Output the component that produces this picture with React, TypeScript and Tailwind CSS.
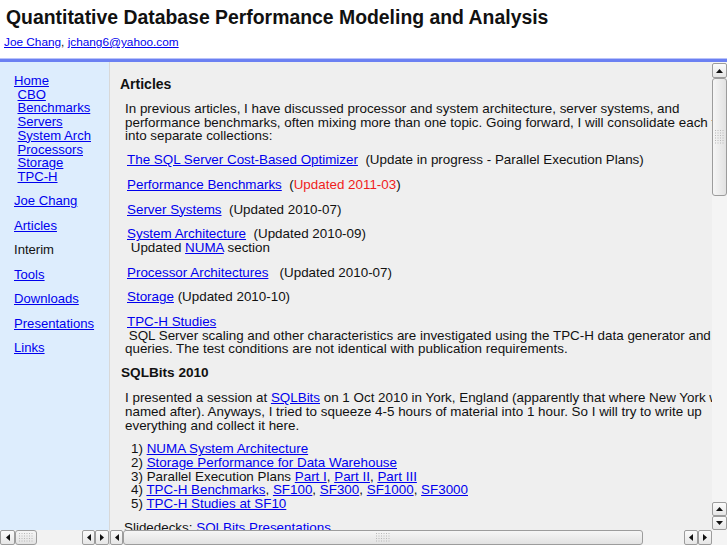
import React from 'react';

const A = 'text-[#0000ee] underline';

function Tri({ dir }: { dir: 'up' | 'down' | 'left' | 'right' }) {
  const pts = {
    up: '1,5 4.5,1 8,5',
    down: '1,1 4.5,5 8,1',
    left: '5,1 1,4.5 5,8',
    right: '1,1 5,4.5 1,8',
  }[dir];
  const vertical = dir === 'up' || dir === 'down';
  return (
    <svg width={vertical ? 9 : 6} height={vertical ? 6 : 9} viewBox={vertical ? '0 0 9 6' : '0 0 6 9'}>
      <polygon points={pts} fill="#111" />
    </svg>
  );
}

function Btn({ dir, className = '' }: { dir: 'up' | 'down' | 'left' | 'right'; className?: string }) {
  return (
    <div
      className={`flex items-center justify-center rounded-[2px] border border-[#9c9c9c] bg-gradient-to-b from-[#fbfbfb] to-[#e6e6e6] ${className}`}
    >
      <Tri dir={dir} />
    </div>
  );
}

function Grip({ vertical }: { vertical?: boolean }) {
  const dots = [];
  const cols = vertical ? 4 : 6;
  const rows = vertical ? 6 : 4;
  for (let r = 0; r < rows; r++)
    for (let c = 0; c < cols; c++)
      dots.push(<rect key={`${r}-${c}`} x={c * 2.5} y={r * 2.5} width="1" height="1" fill="#b8b8b8" />);
  return (
    <svg width={cols * 2.5} height={rows * 2.5}>
      {dots}
    </svg>
  );
}

function Thumb({ className = '', vertical }: { className?: string; vertical?: boolean }) {
  return (
    <div
      className={`flex items-center justify-center rounded-[3px] border border-[#9c9c9c] ${
        vertical ? 'bg-gradient-to-r' : 'bg-gradient-to-b'
      } from-[#f6f6f6] to-[#e2e2e2] ${className}`}
    >
      <Grip vertical={vertical} />
    </div>
  );
}

function Item({ children, className = '' }: { children: React.ReactNode; className?: string }) {
  return <div className={`ml-[7px] mt-[11px] ${className}`}>{children}</div>;
}

function Nav() {
  const sub = ['CBO', 'Benchmarks', 'Servers', 'System Arch', 'Processors', 'Storage', 'TPC-H'];
  const main = ['Articles', 'Interim', 'Tools', 'Downloads', 'Presentations', 'Links'];
  return (
    <div className="flex-1 overflow-hidden bg-[#ddedfd] pl-[14px] pt-[12px] text-[13.1px] leading-[13.7px]">
      <a className={A}>Home</a>
      <div className="flex flex-col items-start pl-[3.5px]">
        {sub.map((s) => (
          <a key={s} className={A}>
            {s}
          </a>
        ))}
      </div>
      <div className="mt-[10.4px]">
        <a className={A}>Joe Chang</a>
      </div>
      {main.map((m) => (
        <div key={m} className="mt-[10.8px]">
          {m === 'Interim' ? <span className="text-[#111]">{m}</span> : <a className={A}>{m}</a>}
        </div>
      ))}
    </div>
  );
}

function Content() {
  return (
    <div className="w-[655px] shrink-0 pl-[10px] text-[13.4px] leading-[13.7px] text-[#111]">
      <h3 className="mt-[14px] text-[14px] font-bold leading-[16px]">Articles</h3>
      <p className="ml-[5px] mt-[10px] w-[630px]">
        In previous articles, I have discussed processor and system architecture, server systems, and
        performance benchmarks, often mixing more than one topic. Going forward, I will consolidate each topic
        into separate collections:
      </p>
      <Item className="!mt-[10px]">
        <a className={A}>The SQL Server Cost-Based Optimizer</a>&nbsp; (Update in progress - Parallel Execution
        Plans)
      </Item>
      <Item>
        <a className={A}>Performance Benchmarks</a>&nbsp; (<span className="text-[#f01c1c]">Updated 2011-03</span>)
      </Item>
      <Item>
        <a className={A}>Server Systems</a>&nbsp; (Updated 2010-07)
      </Item>
      <Item>
        <a className={A}>System Architecture</a>&nbsp; (Updated 2010-09)
        <br />
        &nbsp;Updated <a className={A}>NUMA</a> section
      </Item>
      <Item>
        <a className={A}>Processor Architectures</a>&nbsp;&nbsp; (Updated 2010-07)
      </Item>
      <Item>
        <a className={A}>Storage</a> (Updated 2010-10)
      </Item>
      <div className="ml-[5px] mt-[11px] w-[630px]">
        <a className={`${A} ml-[2px]`}>TPC-H Studies</a>
        <br />
        &nbsp;SQL Server scaling and other characteristics are investigated using the TPC-H data generator and test
        queries. The test conditions are not identical with publication requirements.
      </div>
      <h3 className="ml-[1px] mt-[9px] text-[13.6px] font-bold leading-[16px]">SQLBits 2010</h3>
      <p className="ml-[5px] mt-[10px] w-[630px]">
        I presented a session at <a className={A}>SQLBits</a> on 1 Oct 2010 in York, England (apparently that where
        New York was named after). Anyways, I tried to squeeze 4-5 hours of material into 1 hour. So I will try to
        write up everything and collect it here.
      </p>
      <div className="ml-[11px] mt-[10px]">
        <div>
          1) <a className={A}>NUMA System Architecture</a>
        </div>
        <div>
          2) <a className={A}>Storage Performance for Data Warehouse</a>
        </div>
        <div>
          3) Parallel Execution Plans <a className={A}>Part I</a>, <a className={A}>Part II</a>,{' '}
          <a className={A}>Part III</a>
        </div>
        <div>
          4) <a className={A}>TPC-H Benchmarks</a>, <a className={A}>SF100</a>, <a className={A}>SF300</a>,{' '}
          <a className={A}>SF1000</a>, <a className={A}>SF3000</a>
        </div>
        <div>
          5) <a className={A}>TPC-H Studies at SF10</a>
        </div>
      </div>
      <div className="ml-[4px] mt-[10.5px]">
        Slidedecks: <a className={A}>SQLBits Presentations</a>
      </div>
    </div>
  );
}

export default function App() {
  return (
    <div className="flex h-[545px] w-[727px] flex-col overflow-hidden bg-white font-['Liberation_Sans',Arial,sans-serif]">
      <header className="h-[58px] shrink-0 px-[6px] pt-[6px]">
        <h1 className="text-[19.4px] font-bold leading-[22px] text-[#111]">
          Quantitative Database Performance Modeling and Analysis
        </h1>
        <div className="-ml-[2px] mt-[7px] text-[11.8px] leading-[14px] text-[#111]">
          <a className={A}>Joe Chang</a>, <a className={A}>jchang6@yahoo.com</a>
        </div>
      </header>
      <div className="h-[1px] shrink-0 bg-[#b9c3fa]" />
      <div className="h-[3px] shrink-0 bg-[#6b80f2]" />
      <div className="flex min-h-0 flex-1">
        <div className="flex w-[109px] shrink-0 flex-col">
          <Nav />
          <div className="flex h-[15px] shrink-0 bg-[#f2f2f2]">
            <Btn dir="left" className="w-[15px]" />
            <Thumb className="w-[22px]" />
            <div className="flex-1" />
            <Btn dir="left" className="w-[13px]" />
            <Btn dir="right" className="w-[14px]" />
          </div>
        </div>
        <div className="flex min-w-0 flex-1 flex-col border-l border-[#d8d8d8]">
          <div className="flex min-h-0 flex-1">
            <div className="min-w-0 flex-1 overflow-hidden bg-[#efefef]">
              <Content />
            </div>
            <div className="flex w-[15px] shrink-0 flex-col bg-[#f4f4f4] pt-[1px]">
              <Btn dir="up" className="h-[15px]" />
              <Thumb vertical className="h-[118px]" />
              <div className="flex-1" />
              <Btn dir="up" className="h-[14px]" />
              <Btn dir="down" className="h-[14px]" />
            </div>
          </div>
          <div className="flex h-[15px] shrink-0">
            <div className="flex flex-1 bg-[#f2f2f2]">
              <Btn dir="left" className="w-[13px]" />
              <Thumb className="w-[520px]" />
              <div className="flex-1" />
              <Btn dir="left" className="w-[14px]" />
              <Btn dir="right" className="w-[14px]" />
            </div>
            <div className="w-[15px] bg-[#f4f4f4]" />
          </div>
        </div>
      </div>
    </div>
  );
}
